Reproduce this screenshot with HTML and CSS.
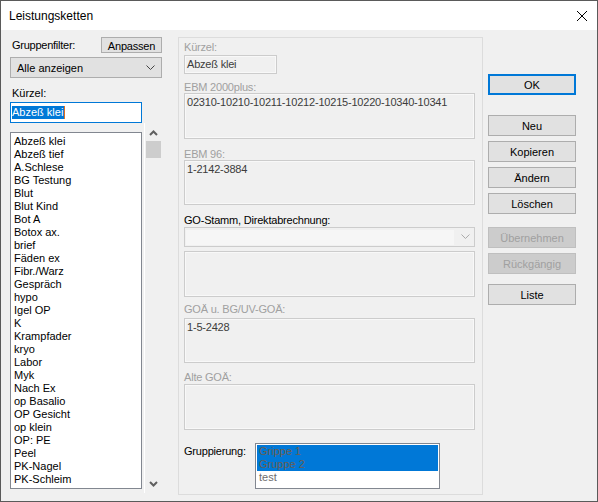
FILE: index.html
```html
<!DOCTYPE html>
<html lang="de">
<head>
    <meta charset="UTF-8">
    <title>Leistungsketten</title>
    <link rel="stylesheet" href="styles.css">
</head>
<body>
<div class="window">
    <div class="titlebar">
        <span class="title">Leistungsketten</span>
        <svg class="close" width="12" height="12" viewBox="0 0 12 12">
            <path d="M1 1 L11 11 M11 1 L1 11" stroke="#000" stroke-width="1" fill="none"/>
        </svg>
    </div>

    <div class="client">
        <!-- linke Spalte -->
        <div class="left">
            <div class="filter-row">
                <span class="filter-label">Gruppenfilter:</span>
                <div class="btn btn-small">Anpassen</div>
            </div>
            <div class="select">
                <span>Alle anzeigen</span>
                <svg width="9" height="6" viewBox="0 0 9 6"><path d="M0.5 0.5 L4.5 4.5 L8.5 0.5" stroke="#444" fill="none"/></svg>
            </div>
            <div class="lbl-left">Kürzel:</div>
            <div class="input-active"><span class="sel-text">Abzeß klei</span><span class="caret"></span></div>

            <div class="list-row">
                <div class="list">
                    <div>Abzeß klei</div>
                    <div>Abzeß tief</div>
                    <div>A.Schlese</div>
                    <div>BG Testung</div>
                    <div>Blut</div>
                    <div>Blut Kind</div>
                    <div>Bot A</div>
                    <div>Botox ax.</div>
                    <div>brief</div>
                    <div>Fäden ex</div>
                    <div>Fibr./Warz</div>
                    <div>Gespräch</div>
                    <div>hypo</div>
                    <div>Igel OP</div>
                    <div>K</div>
                    <div>Krampfader</div>
                    <div>kryo</div>
                    <div>Labor</div>
                    <div>Myk</div>
                    <div>Nach Ex</div>
                    <div>op Basalio</div>
                    <div>OP Gesicht</div>
                    <div>op klein</div>
                    <div>OP: PE</div>
                    <div>Peel</div>
                    <div>PK-Nagel</div>
                    <div>PK-Schleim</div>
                </div>
                <div class="scrollbar">
                    <svg class="arrow-up" width="9" height="6" viewBox="0 0 9 6"><path d="M1 5 L4.5 1.5 L8 5" stroke="#606060" stroke-width="2" fill="none"/></svg>
                    <div class="thumb"></div>
                    <div class="track"></div>
                    <svg class="arrow-down" width="9" height="6" viewBox="0 0 9 6"><path d="M1 1 L4.5 4.5 L8 1" stroke="#606060" stroke-width="2" fill="none"/></svg>
                </div>
            </div>
        </div>

        <!-- Details -->
        <div class="group">
            <div class="lbl dis lbl-kuerzel">Kürzel:</div>
            <div class="field field-short">Abzeß klei</div>

            <div class="lbl dis lbl-ebm2000">EBM 2000plus:</div>
            <div class="box box-46">02310-10210-10211-10212-10215-10220-10340-10341</div>

            <div class="lbl dis lbl-ebm96">EBM 96:</div>
            <div class="box box-45">1-2142-3884</div>

            <div class="lbl lbl-go">GO-Stamm, Direktabrechnung:</div>
            <div class="combo">
                <div class="combo-field"></div>
                <svg width="9" height="6" viewBox="0 0 9 6"><path d="M0.5 0.5 L4.5 4.5 L8.5 0.5" stroke="#a8a8a8" fill="none"/></svg>
            </div>
            <div class="box box-46 box-go"></div>

            <div class="lbl dis lbl-goae">GOÄ u. BG/UV-GOÄ:</div>
            <div class="box box-45 box-goae">1-5-2428</div>

            <div class="lbl dis lbl-alt">Alte GOÄ:</div>
            <div class="box box-46 box-alt"></div>

            <div class="grp-row">
                <div class="lbl grp-label">Gruppierung:</div>
                <div class="grp-list">
                    <div class="item selected">Grippe 1</div>
                    <div class="item selected">Gruppe 2</div>
                    <div class="item">test</div>
                </div>
            </div>
        </div>

        <!-- Buttons -->
        <div class="buttons">
            <div class="btn btn-default">OK</div>
            <div class="btn btn-neu">Neu</div>
            <div class="btn btn-gap5">Kopieren</div>
            <div class="btn btn-gap5">Ändern</div>
            <div class="btn btn-gap5">Löschen</div>
            <div class="btn btn-disabled btn-gap13">Übernehmen</div>
            <div class="btn btn-disabled btn-gap5">Rückgängig</div>
            <div class="btn btn-gap10">Liste</div>
        </div>
    </div>
</div>
</body>
</html>
```

FILE: styles.css
```css
body{
    margin: 0;
    font-family: "Liberation Sans", Arial, sans-serif;
    font-size: 11px;
}

.window{
    width: 598px;
    height: 502px;
    box-sizing: border-box;
    border: 1px solid #5a5a5a;
    background-color: #f0f0f0;
    overflow: hidden;
}

.titlebar{
    height: 29px;
    background-color: #fff;
    display: flex;
    align-items: center;
    justify-content: space-between;
    padding: 0 9px 0 8px;
}
.title{
    font-size: 12px;
    color: #000;
}
.close{
    margin-top: 1px;
}

.client{
    display: flex;
    align-items: flex-start;
    padding-left: 9px;
}

/* linke Spalte */
.left{
    width: 152px;
}
.filter-row{
    margin-top: 7px;
    height: 16px;
    display: flex;
    justify-content: space-between;
    align-items: center;
}
.filter-label{
    padding-left: 2px;
    letter-spacing: -0.25px;
}
.btn{
    box-sizing: border-box;
    height: 21px;
    background-color: #e1e1e1;
    border: 1px solid #adadad;
    display: flex;
    align-items: center;
    justify-content: center;
    color: #000;
}
.btn-small{
    width: 61px;
    height: 16px;
    padding-top: 1px;
    letter-spacing: -0.2px;
}
.select{
    box-sizing: border-box;
    margin-top: 4px;
    height: 21px;
    background-color: #e1e1e1;
    border: 1px solid #adadad;
    display: flex;
    align-items: center;
    justify-content: space-between;
    padding: 1px 6px 0 6px;
}
.lbl-left{
    margin-top: 9px;
    padding-left: 2px;
    line-height: 12px;
}
.input-active{
    box-sizing: border-box;
    margin-top: 3px;
    width: 132px;
    height: 21px;
    border: 1px solid #0078d7;
    background-color: #fff;
    padding: 3px 1px;
    display: flex;
}
.sel-text{
    background-color: #0078d7;
    color: #fff;
    line-height: 13px;
    padding-right: 1px;
}
.caret{
    width: 1px;
    height: 13px;
    background-color: #e07020;
}

.list-row{
    display: flex;
    align-items: flex-start;
}
.list{
    box-sizing: border-box;
    margin-top: 9px;
    width: 132px;
    height: 357px;
    border: 1px solid #828790;
    background-color: #fff;
    padding: 2px 0 0 3px;
    line-height: 13px;
    overflow: hidden;
}
.scrollbar{
    box-sizing: border-box;
    margin-left: 2px;
    width: 17px;
    height: 370px;
    border-left: 1px solid #fff;
    display: flex;
    flex-direction: column;
    align-items: center;
}
.arrow-up{
    margin-top: 7px;
}
.thumb{
    margin-top: 5px;
    width: 15px;
    height: 17px;
    background-color: #cdcdcd;
}
.track{
    flex: 1;
}
.arrow-down{
    margin-bottom: 6px;
}

/* Gruppe in der Mitte */
.group{
    box-sizing: border-box;
    margin-top: 7px;
    margin-left: 16px;
    width: 305px;
    height: 458px;
    border: 1px solid #dcdcdc;
    padding-left: 5px;
}
.lbl{
    line-height: 12px;
    color: #000;
    letter-spacing: -0.2px;
}
.dis{
    color: #a0a0a0;
}
.lbl-kuerzel{ margin-top: 3px; }
.lbl-ebm2000{ margin-top: 7px; }
.lbl-ebm96{ margin-top: 9px; }
.lbl-go{ margin-top: 9px; }
.lbl-goae{ margin-top: 6px; }
.lbl-alt{ margin-top: 8px; }

.field,
.box{
    box-sizing: border-box;
    border: 1px solid #cccccc;
    box-shadow: inset 0 0 0 1px #f8f8f8;
    color: #3c3c3c;
    line-height: 13px;
    padding: 2px 2px;
    letter-spacing: -0.2px;
}
.field-short{
    margin-top: 2px;
    width: 93px;
    height: 19px;
}
.box{
    width: 291px;
}
.box-46{ height: 46px; }
.box-45{ height: 45px; }
.box-go{ margin-top: 4px; }
.box-goae{ margin-top: 3px; }
.box-alt{ margin-top: 1px; }

.combo{
    box-sizing: border-box;
    margin-top: 1px;
    width: 291px;
    height: 20px;
    border: 1px solid #cccccc;
    display: flex;
    align-items: center;
    padding: 2px 4px 2px 1px;
}
.combo-field{
    width: 270px;
    height: 15px;
    background-color: #f6f6f6;
    margin-right: 7px;
}

.grp-row{
    margin-top: 13px;
    display: flex;
    align-items: flex-start;
}
.grp-label{
    width: 71px;
    margin-top: 2px;
}
.grp-list{
    box-sizing: border-box;
    width: 185px;
    height: 46px;
    border: 1px solid #828790;
    background-color: #fff;
    padding: 1px;
}
.item{
    line-height: 13px;
    padding-left: 2px;
    color: #6d6d6d;
}
.item.selected{
    background-color: #0078d7;
    color: #6b5f52;
}

/* Buttons rechts */
.buttons{
    margin-left: 5px;
    width: 88px;
    display: flex;
    flex-direction: column;
}
.buttons .btn{
    padding-top: 1px;
}
.btn-default{
    margin-top: 44px;
    border: 2px solid #0078d7;
}
.btn-neu{ margin-top: 20px; }
.btn-gap5{ margin-top: 5px; }
.btn-gap10{ margin-top: 10px; }
.btn-gap13{ margin-top: 13px; }
.btn-disabled{
    background-color: #cccccc;
    border-color: #bfbfbf;
    color: #a0a0a0;
}
```
